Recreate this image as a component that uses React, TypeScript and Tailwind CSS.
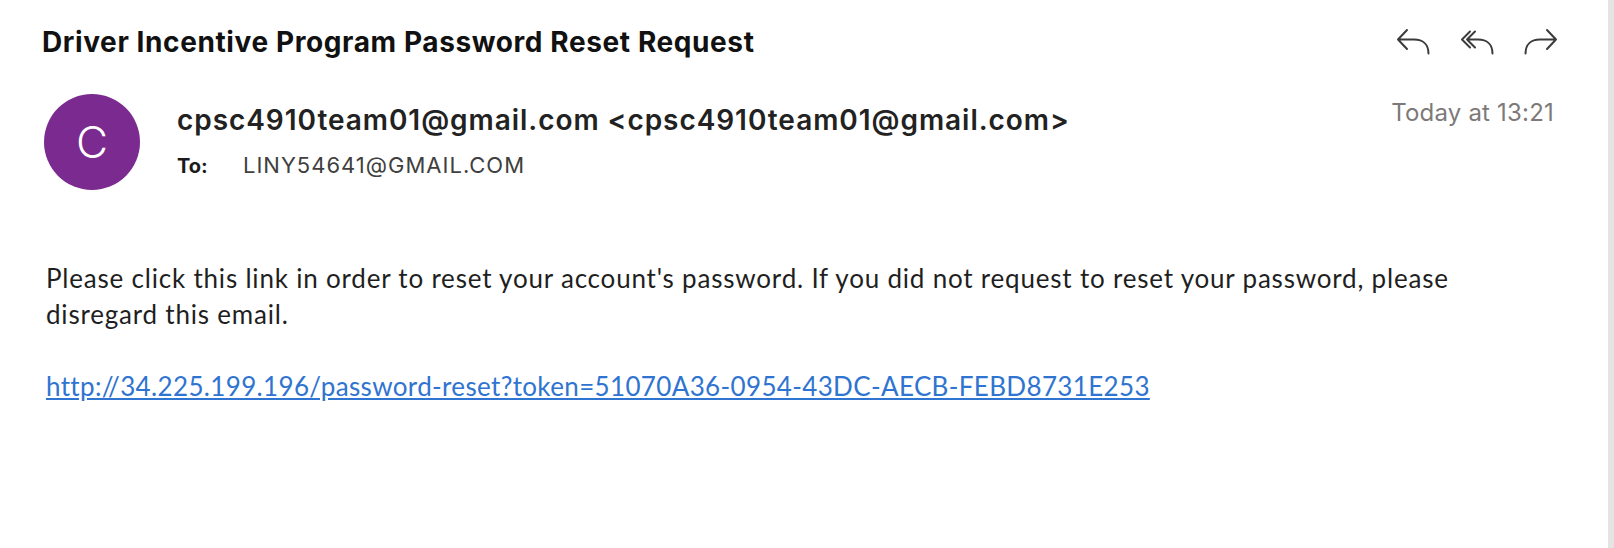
import React from 'react';

const ICON = 'stroke-[#3b3b3b]';

function ReplyIcon() {
  return (
    <svg width="34" height="28" viewBox="0 0 34 28" fill="none" className={ICON} strokeWidth={2} strokeLinecap="round" strokeLinejoin="round">
      <path d="M11 3 L2 12.5 L11 22 M2 12.5 H18 C27 12.5 32.5 17.5 32.5 26.5" />
    </svg>
  );
}

function ReplyAllIcon() {
  return (
    <svg width="34" height="28" viewBox="0 0 34 28" fill="none" className={ICON} strokeWidth={2} strokeLinecap="round" strokeLinejoin="round">
      <path d="M10 4.5 L2 12.5 L10 20.5 M15 4.5 L7 12.5 L15 20.5 M7 12.5 H18 C27 12.5 32.5 17.5 32.5 26.5" />
    </svg>
  );
}

function ForwardIcon() {
  return (
    <svg width="34" height="28" viewBox="0 0 34 28" fill="none" className={ICON} strokeWidth={2} strokeLinecap="round" strokeLinejoin="round">
      <path d="M23 3 L32 12.5 L23 22 M32 12.5 H16 C7 12.5 1.5 17.5 1.5 26.5" />
    </svg>
  );
}

export default function App() {
  const sender = 'cpsc4910team01@gmail.com';

  return (
    <div className="flex h-[548px] w-full bg-white">
      <div className="flex-1 pl-[42px] pr-[50px] font-['Inter',sans-serif]">
        {/* Subject + actions */}
        <div className="flex items-start justify-between pt-[26px]">
          <h1 className="text-[28px] leading-[32px] font-bold tracking-[0.6px] text-[#111111]">
            Driver Incentive Program Password Reset Request
          </h1>
          <div className="mt-[1px] flex gap-[30px]">
            <ReplyIcon />
            <ReplyAllIcon />
            <ForwardIcon />
          </div>
        </div>

        {/* Sender */}
        <div className="mt-[36px] flex items-start">
          <div className="ml-[2px] flex h-[96px] w-[96px] shrink-0 items-center justify-center rounded-full bg-[#7b2a8f]">
            <span className="text-[44px] leading-none font-light text-white">C</span>
          </div>
          <div className="ml-[37px] flex-1 pt-[10px]">
            <div className="text-[28px] leading-[32px] font-semibold tracking-[0.95px] text-[#222222]">
              {sender} &lt;{sender}&gt;
            </div>
            <div className="mt-[16px] flex items-baseline">
              <span className="w-[66px] text-[20px] leading-[26px] font-bold text-[#1a1a1a]">To:</span>
              <span className="text-[22px] leading-[26px] tracking-[1px] text-[#404040]">LINY54641@GMAIL.COM</span>
            </div>
          </div>
          <div className="mt-[5px] mr-[4px] text-[24px] leading-[28px] tracking-[0.2px] text-[#7d7979]">
            Today at 13:21
          </div>
        </div>

        {/* Body */}
        <div className="mt-[70px] pl-[4px] font-['Lato',sans-serif] text-[26px] leading-[36px] tracking-[0.8px] text-[#1f1f1f]">
          <p>
            Please click this link in order to reset your account's password. If you did not request to reset your
            password, please
            <br />
            disregard this email.
          </p>
          <p className="mt-[36px]">
            <a href="#" className="tracking-[0.35px] text-[#2f74d0] underline">
              http://34.225.199.196/password-reset?token=51070A36-0954-43DC-AECB-FEBD8731E253
            </a>
          </p>
        </div>
      </div>
      <div className="w-[6px] bg-[#e4e4e4]" />
    </div>
  );
}
